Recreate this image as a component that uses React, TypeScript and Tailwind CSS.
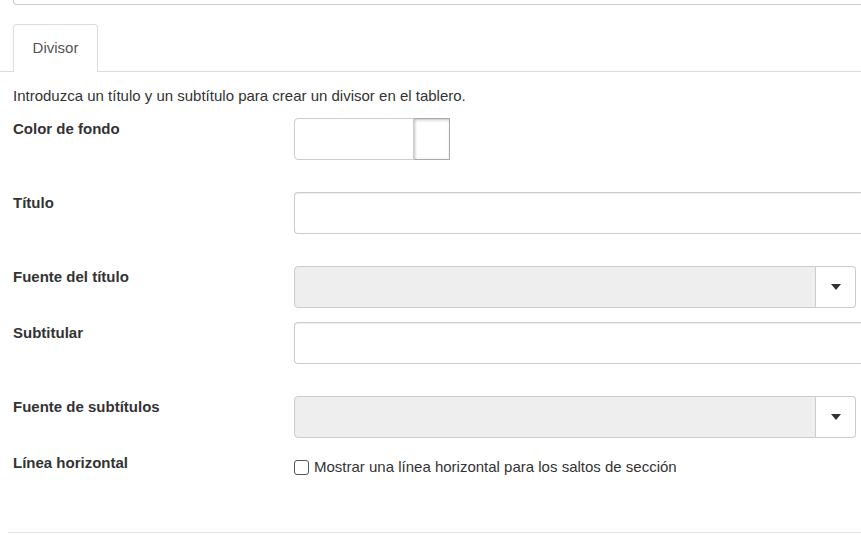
import React from "react";

function Caret() {
  return (
    <svg width="10" height="6" viewBox="0 0 10 6" className="block">
      <path d="M0 0 L10 0 L5 6 Z" fill="#333" />
    </svg>
  );
}

function Label({ children }: { children: React.ReactNode }) {
  return (
    <div className="w-[281px] shrink-0 pt-[1px] font-bold text-[15px] leading-[20px] text-[#333]">
      {children}
    </div>
  );
}

function SelectBox() {
  return (
    <div className="flex h-[42px]">
      <div className="w-[522px] h-full rounded-l-[4px] border border-[#ccc] bg-[#eee]" />
      <div className="w-[40px] h-full flex items-center justify-center rounded-r-[4px] border border-l-0 border-[#ccc] bg-white">
        <Caret />
      </div>
    </div>
  );
}

function TextBox() {
  return (
    <div className="h-[42px] flex-1 rounded-l-[4px] border border-r-0 border-[#ccc] bg-white shadow-[inset_0_1px_1px_rgba(0,0,0,0.075)]" />
  );
}

export default function App() {
  return (
    <div className="w-[861px] h-[535px] overflow-hidden bg-white text-[#333]" style={{ fontFamily: '"Liberation Sans", Arial, sans-serif' }}>
      <div className="ml-[13px] h-[5px] rounded-bl-[4px] border-l border-b border-[#ccc]" />
      <div className="mt-[19px] flex items-end">
        <div className="w-[13px] border-b border-[#ddd]" />
        <div className="w-[85px] h-[48px] flex items-center justify-center rounded-t-[4px] border border-b-0 border-[#ddd] text-[15px] text-[#555]">
          Divisor
        </div>
        <div className="flex-1 border-b border-[#ddd]" />
      </div>
      <div className="pl-[13px]">
        <p className="mt-[14px] text-[15px] leading-[20px]">
          Introduzca un título y un subtítulo para crear un divisor en el tablero.
        </p>
        <div className="mt-[12px] flex">
          <Label>Color de fondo</Label>
          <div className="flex h-[42px]">
            <div className="w-[120px] h-full rounded-l-[4px] border border-[#ccc] bg-white" />
            <div className="w-[36px] h-full border border-l-0 border-[#aaa] shadow-[inset_1px_1px_3px_rgba(0,0,0,0.25)] bg-white" />
          </div>
        </div>
        <div className="mt-[32px] flex">
          <Label>Título</Label>
          <TextBox />
        </div>
        <div className="mt-[32px] flex">
          <Label>Fuente del título</Label>
          <SelectBox />
        </div>
        <div className="mt-[14px] flex">
          <Label>Subtitular</Label>
          <TextBox />
        </div>
        <div className="mt-[32px] flex">
          <Label>Fuente de subtítulos</Label>
          <SelectBox />
        </div>
        <div className="mt-[14px] flex">
          <Label>Línea horizontal</Label>
          <label className="flex items-center gap-[5px] text-[15px] leading-[20px] pt-[5px]">
            <span className="w-[15px] h-[15px] rounded-[3px] border border-[#555] bg-white" />
            Mostrar una línea horizontal para los saltos de sección
          </label>
        </div>
      </div>
      <div className="ml-[8px] mt-[55px] border-b border-[#e5e5e5]" />
    </div>
  );
}
